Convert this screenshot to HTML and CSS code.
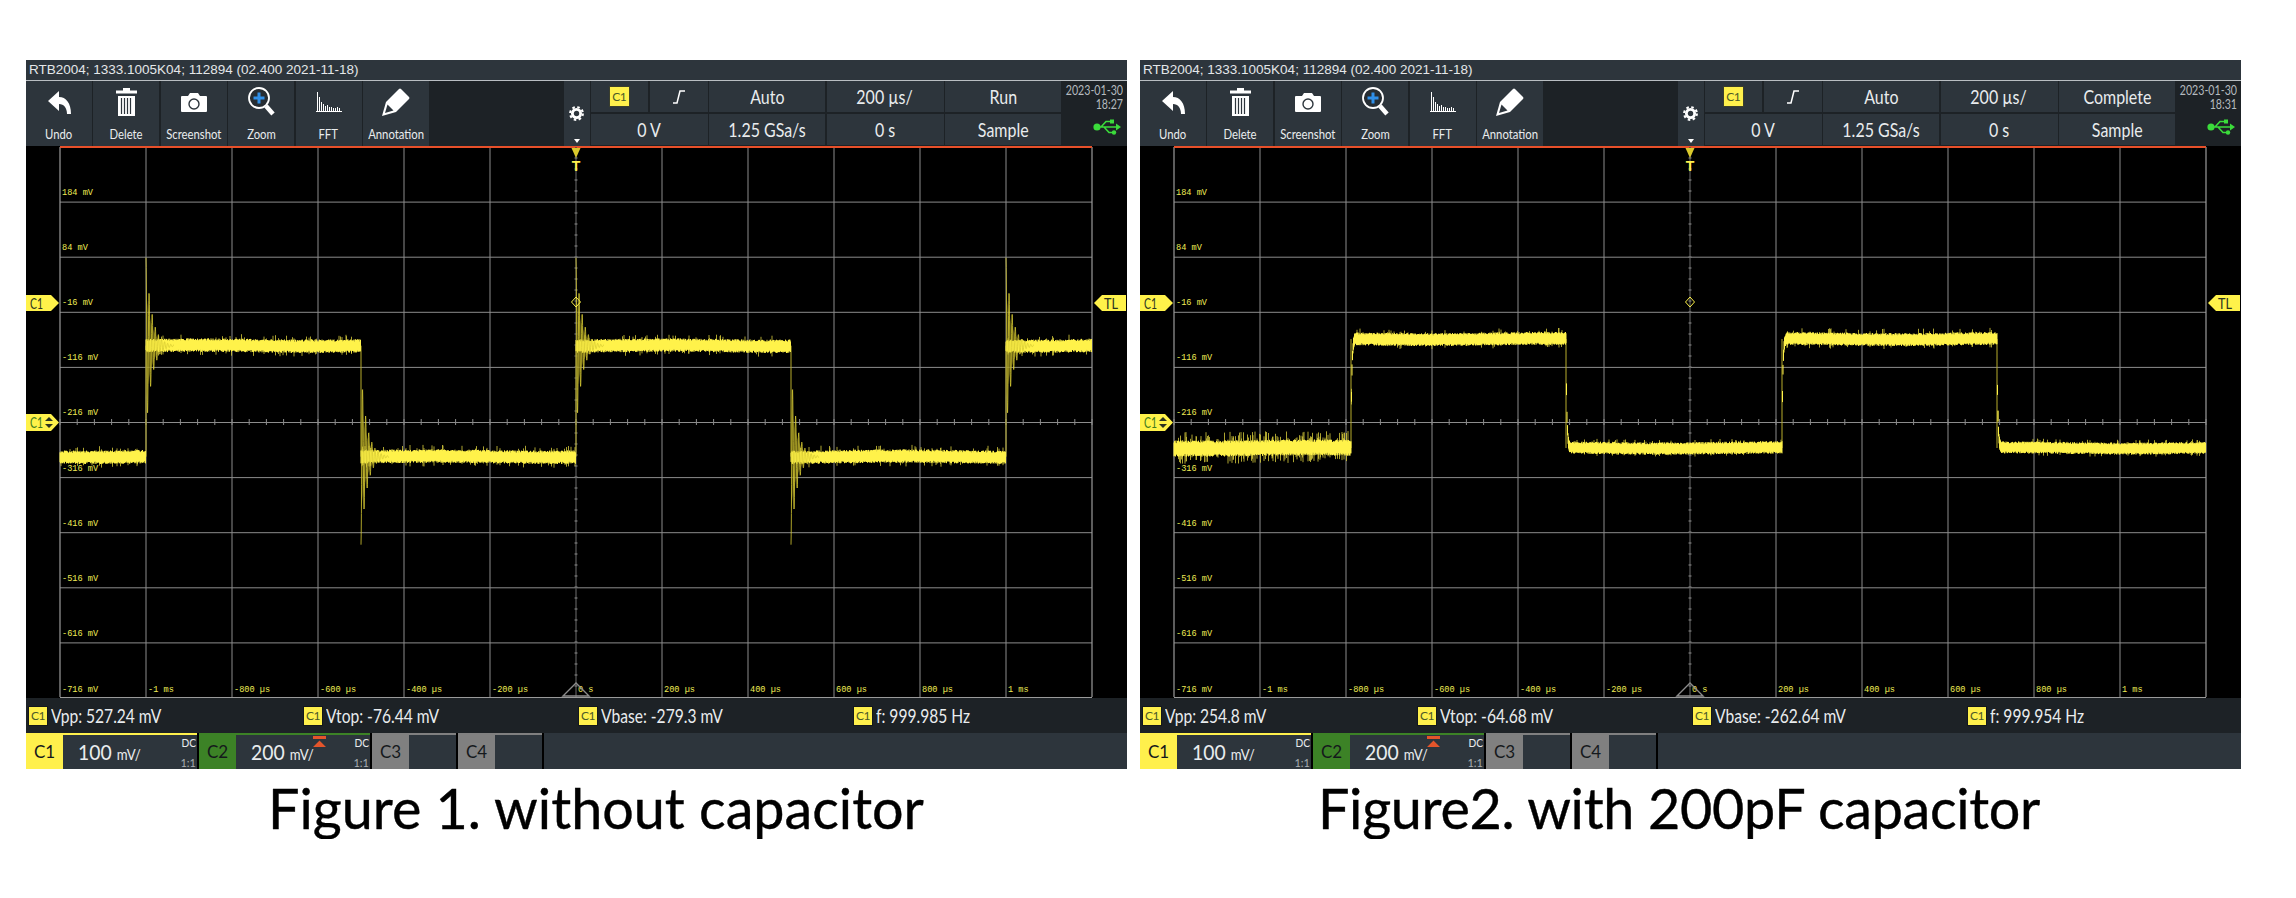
FILE: index.html
```html
<!DOCTYPE html>
<html>
<head>
    <title>Oscilloscope capture: with and without capacitor</title>
    <link rel="stylesheet" href="styles.css">
</head>
<body>
    <!-- shared icons -->
    <svg class="defs" width="0" height="0">
        <symbol id="i-undo" viewBox="0 0 23 23">
            <path d="M0 10 L11 0 V6 C18 6 23 12 23 23 H19 C19 17 16 13 11 13 V20 Z" fill="#fff"/>
        </symbol>
        <symbol id="i-trash" viewBox="0 0 21 28">
            <path d="M7 0 H14 V2.5 H21 V5.5 H0 V2.5 H7 Z M2 8 H19 V28 H2 Z" fill="#fff"/>
            <path d="M5.5 10 V26 M8.5 10 V26 M11.5 10 V26 M14.5 10 V26" stroke="#2d353c" stroke-width="1.2"/>
        </symbol>
        <symbol id="i-camera" viewBox="0 0 26 19">
            <path d="M0 4 Q0 3 1 3 H7 L9 0 H17 L19 3 H25 Q26 3 26 4 V18 Q26 19 25 19 H1 Q0 19 0 18 Z" fill="#fff"/>
            <circle cx="13" cy="11" r="5" fill="#fff" stroke="#2d353c" stroke-width="1.4"/>
        </symbol>
        <symbol id="i-zoom" viewBox="0 0 27 29">
            <circle cx="11" cy="11" r="10" fill="#262d33" stroke="#fff" stroke-width="1.8"/>
            <path d="M11 5.5 V16.5 M5.5 11 H16.5" stroke="#2f8fe8" stroke-width="3"/>
            <path d="M18 19 L25 27" stroke="#fff" stroke-width="4.5"/>
        </symbol>
        <symbol id="i-fft" viewBox="0 0 26 20">
            <path d="M0 19.5 H26 M1.5 19 V0 M3.5 19 V5 M5.5 19 V10 M7.5 19 V12 M9.5 19 V14 M11.5 19 V13 M13.5 19 V15 M15.5 19 V15 M17.5 19 V16 M19.5 19 V16 M21.5 19 V15 M23.5 19 V16" stroke="#fff" stroke-width="1"/>
        </symbol>
        <symbol id="i-pencil" viewBox="0 0 28 28">
            <path d="M0 28 L4 14 L17 1 Q18 0 19 1 L27 9 Q28 10 27 11 L14 24 Z" fill="#fff"/>
            <path d="M3 25 L5.5 16.5 L11.5 22.5 Z" fill="#2d353c"/>
        </symbol>
        <symbol id="i-gear" viewBox="0 0 16 16">
            <circle cx="8" cy="8" r="4.4" fill="none" stroke="#fff" stroke-width="3"/>
            <circle cx="8" cy="8" r="6.8" fill="none" stroke="#fff" stroke-width="2.2" stroke-dasharray="2.7 2.64"/>
        </symbol>
        <symbol id="i-usb" viewBox="0 0 28 16">
            <path d="M4 8 H24 M8 8 L13 2.5 H18 M11 8 L16 13.5 H20" fill="none" stroke="#3bdc3b" stroke-width="1.6"/>
            <circle cx="4" cy="8" r="3.6" fill="#3bdc3b"/>
            <path d="M23 4.5 L28 8 L23 11.5 Z M17 0.5 H21 V4.5 H17 Z" fill="#3bdc3b"/>
            <circle cx="21" cy="13.5" r="2.2" fill="#3bdc3b"/>
        </symbol>
        <symbol id="i-slope" viewBox="0 0 12 14">
            <path d="M0 13 H4 L7 1 H12" fill="none" stroke="#fff" stroke-width="1.5"/>
        </symbol>
        <symbol id="i-offset" viewBox="0 0 13 11">
            <path d="M0 0 H13 V3 H0 Z M6.5 4.5 L13 11 H0 Z" fill="#e4552b"/>
        </symbol>
    </svg>

    <div class="captures">
        <!-- Figure 1 -->
        <div class="capture">
            <div class="scope">
                <div class="title-bar">RTB2004; 1333.1005K04; 112894 (02.400 2021-11-18)</div>
                <div class="toolbar">
                    <div class="tool"><svg class="ico undo"><use href="#i-undo"/></svg><span>Undo</span></div>
                    <div class="tool"><svg class="ico trash"><use href="#i-trash"/></svg><span>Delete</span></div>
                    <div class="tool"><svg class="ico camera"><use href="#i-camera"/></svg><span>Screenshot</span></div>
                    <div class="tool"><svg class="ico zoom"><use href="#i-zoom"/></svg><span>Zoom</span></div>
                    <div class="tool"><svg class="ico fft"><use href="#i-fft"/></svg><span>FFT</span></div>
                    <div class="tool"><svg class="ico pencil"><use href="#i-pencil"/></svg><span>Annotation</span></div>
                    <div class="spacer"></div>
                    <div class="gear"><svg class="ico gear-ico"><use href="#i-gear"/></svg><i class="caret"></i></div>
                    <div class="status">
                        <div class="cell"><b class="chip">C1</b></div>
                        <div class="cell"><svg class="ico slope"><use href="#i-slope"/></svg></div>
                        <div class="cell"><span>Auto</span></div>
                        <div class="cell"><span>200 µs/</span></div>
                        <div class="cell"><span>Run</span></div>
                        <div class="cell wide"><span>0 V</span></div>
                        <div class="cell"><span>1.25 GSa/s</span></div>
                        <div class="cell"><span>0 s</span></div>
                        <div class="cell"><span>Sample</span></div>
                    </div>
                    <div class="clock">
                        <div>2023-01-30</div>
                        <div>18:27</div>
                        <svg class="ico usb"><use href="#i-usb"/></svg>
                    </div>
                </div>
                <svg class="plot" id="plot1" width="1101" height="552"></svg>
                <div class="measures">
                    <div class="measure"><b class="chip">C1</b><span>Vpp: 527.24 mV</span></div>
                    <div class="measure"><b class="chip">C1</b><span>Vtop: -76.44 mV</span></div>
                    <div class="measure"><b class="chip">C1</b><span>Vbase: -279.3 mV</span></div>
                    <div class="measure"><b class="chip">C1</b><span>f: 999.985 Hz</span></div>
                </div>
                <div class="channels">
                    <div class="ch on c1"><div class="ch-tag">C1</div><div class="ch-body"><span class="scale">100 <small>mV/</small></span><span class="dc">DC</span><span class="ratio">1:1</span></div></div>
                    <div class="ch on c2"><div class="ch-tag">C2</div><div class="ch-body"><span class="scale">200 <small>mV/</small></span><svg class="ico offset"><use href="#i-offset"/></svg><span class="dc">DC</span><span class="ratio">1:1</span></div></div>
                    <div class="ch off"><div class="ch-tag">C3</div><div class="ch-body"></div></div>
                    <div class="ch off"><div class="ch-tag">C4</div><div class="ch-body"></div></div>
                    <div class="ch-rest"></div>
                </div>
            </div>
            <div class="caption first">Figure 1. without capacitor</div>
        </div>

        <!-- Figure 2 -->
        <div class="capture">
            <div class="scope">
                <div class="title-bar">RTB2004; 1333.1005K04; 112894 (02.400 2021-11-18)</div>
                <div class="toolbar">
                    <div class="tool"><svg class="ico undo"><use href="#i-undo"/></svg><span>Undo</span></div>
                    <div class="tool"><svg class="ico trash"><use href="#i-trash"/></svg><span>Delete</span></div>
                    <div class="tool"><svg class="ico camera"><use href="#i-camera"/></svg><span>Screenshot</span></div>
                    <div class="tool"><svg class="ico zoom"><use href="#i-zoom"/></svg><span>Zoom</span></div>
                    <div class="tool"><svg class="ico fft"><use href="#i-fft"/></svg><span>FFT</span></div>
                    <div class="tool"><svg class="ico pencil"><use href="#i-pencil"/></svg><span>Annotation</span></div>
                    <div class="spacer"></div>
                    <div class="gear"><svg class="ico gear-ico"><use href="#i-gear"/></svg><i class="caret"></i></div>
                    <div class="status">
                        <div class="cell"><b class="chip">C1</b></div>
                        <div class="cell"><svg class="ico slope"><use href="#i-slope"/></svg></div>
                        <div class="cell"><span>Auto</span></div>
                        <div class="cell"><span>200 µs/</span></div>
                        <div class="cell"><span>Complete</span></div>
                        <div class="cell wide"><span>0 V</span></div>
                        <div class="cell"><span>1.25 GSa/s</span></div>
                        <div class="cell"><span>0 s</span></div>
                        <div class="cell"><span>Sample</span></div>
                    </div>
                    <div class="clock">
                        <div>2023-01-30</div>
                        <div>18:31</div>
                        <svg class="ico usb"><use href="#i-usb"/></svg>
                    </div>
                </div>
                <svg class="plot" id="plot2" width="1101" height="552"></svg>
                <div class="measures">
                    <div class="measure"><b class="chip">C1</b><span>Vpp: 254.8 mV</span></div>
                    <div class="measure"><b class="chip">C1</b><span>Vtop: -64.68 mV</span></div>
                    <div class="measure"><b class="chip">C1</b><span>Vbase: -262.64 mV</span></div>
                    <div class="measure"><b class="chip">C1</b><span>f: 999.954 Hz</span></div>
                </div>
                <div class="channels">
                    <div class="ch on c1"><div class="ch-tag">C1</div><div class="ch-body"><span class="scale">100 <small>mV/</small></span><span class="dc">DC</span><span class="ratio">1:1</span></div></div>
                    <div class="ch on c2"><div class="ch-tag">C2</div><div class="ch-body"><span class="scale">200 <small>mV/</small></span><svg class="ico offset"><use href="#i-offset"/></svg><span class="dc">DC</span><span class="ratio">1:1</span></div></div>
                    <div class="ch off"><div class="ch-tag">C3</div><div class="ch-body"></div></div>
                    <div class="ch off"><div class="ch-tag">C4</div><div class="ch-body"></div></div>
                    <div class="ch-rest"></div>
                </div>
            </div>
            <div class="caption second">Figure2. with 200pF capacitor</div>
        </div>
    </div>
    <script src="script.js"></script>
</body>
</html>
```

FILE: styles.css
```css
body {
    margin: 0;
    background: #fff;
    font-family: "Lato", "Noto Sans", sans-serif;
}
.defs {
    display: block;
    height: 0;
}
.captures {
    display: flex;
    gap: 13px;
    padding: 60px 0 0 26px;
}
.capture {
    width: 1101px;
}
.scope {
    background: #000;
    color: #e9ecee;
}
.title-bar {
    height: 20px;
    line-height: 20px;
    padding-left: 3px;
    background: #2d353c;
    border-bottom: 1px solid #b9bec2;
    font-family: "Liberation Sans", sans-serif;
    font-size: 13.5px;
    color: #e4e7e9;
}

/* top toolbar */
.toolbar {
    display: flex;
    height: 65px;
    background: #1d2226;
}
.tool {
    width: 66px;
    margin-right: 1.4px;
    background: #2d353c;
    position: relative;
    display: flex;
    flex-direction: column;
    align-items: center;
}
.tool span {
    position: absolute;
    top: 45px;
    font-size: 13px;
    line-height: 16px;
    white-space: nowrap;
    transform: scaleX(.87);
}
.ico {
    display: block;
    flex: none;
}
.undo { width: 23px; height: 23px; margin-top: 10px; }
.trash { width: 21px; height: 28px; margin-top: 7px; }
.camera { width: 26px; height: 19px; margin-top: 12px; }
.zoom { width: 27px; height: 29px; margin-top: 6px; }
.fft { width: 26px; height: 20px; margin-top: 11px; }
.pencil { width: 28px; height: 28px; margin-top: 7px; }
.spacer {
    flex: 1;
}
.gear {
    width: 26px;
    margin-right: 1px;
    background: #2d353c;
    display: flex;
    flex-direction: column;
    align-items: center;
}
.gear-ico {
    width: 15px;
    height: 15px;
    margin-top: 25px;
}
.caret {
    margin-top: 18px;
    border: 3.5px solid transparent;
    border-top: 4px solid #fff;
    border-bottom: 0;
}
.status {
    display: grid;
    grid-template-columns: 57.5px 58px 116px 117px 116px;
    grid-template-rows: 31px 31px;
    gap: 2px 1.5px;
}
.cell {
    background: #2d353c;
    display: flex;
    align-items: center;
    justify-content: center;
    font-size: 19px;
    color: #e9ecee;
}
.cell span {
    white-space: nowrap;
    transform: scaleX(.84);
}
.wide {
    grid-column: span 2;
}
.slope {
    width: 12px;
    height: 14px;
}
.chip {
    display: flex;
    align-items: center;
    justify-content: center;
    flex: none;
    width: 20px;
    height: 20px;
    background: #fff04c;
    border: 1px solid #14181b;
    box-sizing: border-box;
    font-size: 12px;
    font-weight: 400;
    color: #4c5a28;
    letter-spacing: -.5px;
}
.cell .chip {
    border-color: #3b3f2c;
    width: 21px;
    height: 21px;
}
.clock {
    width: 66px;
    flex: none;
    padding: 2px 4px 0 0;
    box-sizing: border-box;
    font-size: 14px;
    line-height: 14px;
    color: #b4babf;
}
.clock div {
    display: flex;
    justify-content: flex-end;
    white-space: nowrap;
    transform: scaleX(.76);
    transform-origin: right;
}
.usb {
    width: 28px;
    height: 16px;
    margin: 8px 2px 0 auto;
}

.plot {
    display: block;
}
.plot text {
    font-family: "Liberation Mono", monospace;
    font-size: 8.6px;
    fill: #eeeb55;
}
.plot .flag-text {
    font-family: "Lato", sans-serif;
    font-size: 16px;
    fill: #2b3320;
}
.plot .flag-text.green {
    fill: #3e7a1c;
}
.plot .t-mark {
    font-family: "Liberation Sans", sans-serif;
    font-size: 14px;
    font-weight: 700;
    fill: #fff04c;
}

/* measurement row */
.measures {
    display: grid;
    grid-template-columns: repeat(4, 275px);
    height: 35px;
    background: #1d2226;
    font-size: 19px;
}
.measure {
    display: flex;
    align-items: center;
    gap: 3px;
    padding-left: 2px;
    white-space: nowrap;
}
.measure span {
    transform: scaleX(.82);
    transform-origin: left;
}

/* channel row */
.channels {
    display: flex;
    height: 36px;
    gap: 2px;
    background: #000;
}
.ch {
    display: flex;
    flex: none;
}
.ch-tag {
    width: 37px;
    display: flex;
    align-items: center;
    justify-content: center;
    font-size: 17px;
    color: #15191c;
}
.ch-body {
    position: relative;
    background: #2d353c;
    border-top: 2px solid #9a9a9a;
    box-sizing: border-box;
}
.c1 .ch-tag { background: #fff04c; }
.c1 .ch-body { border-top-color: #fff04c; }
.c2 .ch-tag { background: #3c8226; }
.c2 .ch-body { border-top-color: #3c8226; }
.on .ch-body { width: 134px; }
.off .ch-tag { background: #808080; }
.off .ch-body { width: 47px; border-top-color: #808080; }
.scale {
    position: absolute;
    left: 15px;
    top: 4px;
    font-size: 22px;
    line-height: 26px;
    white-space: nowrap;
    transform: scaleX(.88);
    transform-origin: left;
}
.scale small {
    font-size: 15px;
}
.dc {
    position: absolute;
    right: 1px;
    top: 2px;
    font-size: 12px;
    line-height: 12px;
    transform: scaleX(.85);
    transform-origin: right;
}
.ratio {
    position: absolute;
    right: 1px;
    bottom: 0;
    font-size: 11px;
    line-height: 12px;
    color: #a8adb1;
}
.offset {
    position: absolute;
    left: 77px;
    top: 1px;
    width: 13px;
    height: 11px;
}
.ch-rest {
    flex: 1;
    background: #2d353c;
}

.caption {
    margin-top: 8px;
    font-size: 55.7px;
    line-height: 62px;
    color: #000;
    white-space: nowrap;
    -webkit-text-stroke: .4px #000;
}
.first {
    padding-left: 242px;
}
.second {
    padding-left: 178px;
    letter-spacing: -.3px;
}
```

FILE: script.js
```js
// draws grid, labels, markers and the noisy trace of one capture
var SVG_NS = 'http://www.w3.org/2000/svg';
var LEFT = 34, RIGHT = 1066, TOP = 1, BOTTOM = 551, MID_X = 550, MID_Y = 276;
var TRACE = '#fff24a';

function add(svg, tag, attrs, text) {
    var el = document.createElementNS(SVG_NS, tag);
    for (var k in attrs) el.setAttribute(k, attrs[k]);
    if (text) el.textContent = text;
    svg.appendChild(el);
    return el;
}

function rng(seed) {
    return function () {
        seed = (seed * 1664525 + 1013904223) % 4294967296;
        return seed / 4294967296;
    };
}

function drawGrid(svg) {
    var i, d = '';
    for (i = 1; i < 12; i++) {
        if (LEFT + i * 86 === MID_X) continue;
        d += 'M' + (LEFT + i * 86) + ' ' + TOP + 'V' + BOTTOM;
    }
    add(svg, 'path', { d: d, stroke: '#5e5e5e', 'stroke-width': 1.5 });

    d = '';
    for (i = 1; i < 10; i++) d += 'M' + LEFT + ' ' + (TOP + i * 55.1).toFixed(1) + 'H' + RIGHT;
    add(svg, 'path', { d: d, stroke: '#8c8c8c', 'stroke-width': 1 });

    // frame
    add(svg, 'path', { d: 'M' + LEFT + ' ' + BOTTOM + 'V' + TOP + 'M' + RIGHT + ' ' + TOP + 'V' + BOTTOM + 'M' + LEFT + ' ' + (BOTTOM + .5) + 'H' + RIGHT, stroke: '#9a9a9a', 'stroke-width': 1.2 });
    add(svg, 'path', { d: 'M' + (LEFT) + ' 1H' + RIGHT, stroke: '#e8502a', 'stroke-width': 2 });

    // centre axes with ticks
    add(svg, 'path', { d: 'M' + MID_X + ' ' + TOP + 'V' + BOTTOM, stroke: '#4a4a4a', 'stroke-width': 1.5 });
    d = '';
    for (i = 0; i <= 60; i++) d += 'M' + (LEFT + i * 17.2).toFixed(1) + ' ' + (MID_Y - 3) + 'v6';
    for (i = 1; i < 50; i++) d += 'M' + (MID_X - 1.5) + ' ' + (TOP + i * 11) + 'h3';
    add(svg, 'path', { d: d, stroke: '#8c8c8c', 'stroke-width': 1 });
}

function drawLabels(svg) {
    var yLabels = ['184 mV', '84 mV', '-16 mV', '-116 mV', '-216 mV', '-316 mV', '-416 mV', '-516 mV', '-616 mV'];
    yLabels.forEach(function (t, i) {
        add(svg, 'text', { x: LEFT + 2, y: 49 + i * 55.1 }, t);
    });
    var xLabels = ['-716 mV', '-1 ms', '-800 µs', '-600 µs', '-400 µs', '-200 µs', '0 s', '200 µs', '400 µs', '600 µs', '800 µs', '1 ms'];
    xLabels.forEach(function (t, i) {
        add(svg, 'text', { x: LEFT + 2 + i * 86, y: 546 }, t);
    });
}

function drawMarkers(svg) {
    add(svg, 'path', { d: 'M0 149H25L33 157L25 165H0Z M0 268H25L33 276.5L25 285H0Z M1100 149H1076L1068 157L1076 165H1100Z', fill: TRACE });
    add(svg, 'text', { x: 4, y: 163, class: 'flag-text', textLength: 13, lengthAdjust: 'spacingAndGlyphs' }, 'C1');
    add(svg, 'text', { x: 4, y: 282, class: 'flag-text green', textLength: 13, lengthAdjust: 'spacingAndGlyphs' }, 'C1');
    add(svg, 'path', { d: 'M19 275L23 271L27 275Z M19 278L23 282L27 278Z', fill: '#2b3320' });
    add(svg, 'text', { x: 1078, y: 163, class: 'flag-text', textLength: 14, lengthAdjust: 'spacingAndGlyphs' }, 'TL');

    add(svg, 'path', { d: 'M' + (MID_X - 4.5) + ' 2H' + (MID_X + 4.5) + 'L' + MID_X + ' 12Z', fill: '#d9c92c' });
    add(svg, 'text', { x: MID_X - 4.3, y: 25, class: 't-mark' }, 'T');
    add(svg, 'path', { d: 'M' + MID_X + ' 151L' + (MID_X + 4.5) + ' 156L' + MID_X + ' 161L' + (MID_X - 4.5) + ' 156Z', fill: 'none', stroke: TRACE, 'stroke-width': 1 });
    add(svg, 'path', { d: 'M' + (MID_X - 13) + ' 550L' + MID_X + ' 537L' + (MID_X + 13) + ' 550Z', fill: 'none', stroke: '#8c8c8c', 'stroke-width': 1.4 });
}

// plateaus: x where it starts, y level, band half height, noise spike size, spike rate
function drawTrace(svg, cfg) {
    var rand = rng(cfg.seed), band = '', spikes = '', ring = '', glow = '', edges = '';
    cfg.parts.forEach(function (p, i) {
        var next = cfg.parts[i + 1], end = next ? next.x : RIGHT, x;
        var prev = cfg.parts[i - 1];
        for (x = p.x; x < end; x += 0.5) {
            var t = x - p.x;
            var settle = prev && !cfg.ring ? (prev.y - p.y) * Math.exp(-t / 0.8) : 0;
            var y = p.y + settle + Math.sin(x / 37) * 0.6;
            var hi = p.band * (0.8 + rand() * 0.45), lo = p.band * (0.8 + rand() * 0.45);
            band += 'M' + x + ' ' + (y - hi).toFixed(1) + 'V' + (y + lo).toFixed(1);
            if (rand() < p.rate) {
                var s = p.spike * (0.5 + rand() * 0.7);
                spikes += 'M' + x + ' ' + (y - s).toFixed(1) + 'V' + (y + p.spike * (0.4 + rand() * 0.7)).toFixed(1);
            }
        }
        if (prev) {
            edges += 'M' + p.x + ' ' + prev.y + 'V' + p.y;
            if (cfg.ring) {
                var dir = p.y < prev.y ? -1 : 1, k;
                ring += 'M' + p.x + ' ' + (p.y + dir * cfg.ring).toFixed(1);
                for (k = 0.2; k < 28; k += 0.2) {
                    // decaying ring: fast period, envelope from the spike height
                    var env = cfg.ring * Math.exp(-k / 6);
                    var v = p.y + dir * env * Math.cos(k * 2 * Math.PI / 3.1);
                    ring += 'L' + (p.x + k).toFixed(1) + ' ' + v.toFixed(1);
                    // dim smear under the ring
                    if (k < 20) glow += 'M' + (p.x + k).toFixed(1) + ' ' + (p.y - env * 0.6).toFixed(1) + 'V' + (p.y + env * 0.6).toFixed(1);
                }
            }
        }
    });
    add(svg, 'path', { d: edges, stroke: '#b8ad2c', 'stroke-width': 1, fill: 'none' });
    if (glow) add(svg, 'path', { d: glow, stroke: '#6e6818', 'stroke-width': 0.2 });
    add(svg, 'path', { d: spikes, stroke: '#d8cd3c', 'stroke-width': 0.8 });
    add(svg, 'path', { d: band, stroke: TRACE, 'stroke-width': 1 });
    if (ring) add(svg, 'path', { d: ring, stroke: '#d8cc34', 'stroke-width': 0.8, fill: 'none' });
}

function drawPlot(id, cfg) {
    var svg = document.getElementById(id);
    drawGrid(svg);
    drawLabels(svg);
    drawTrace(svg, cfg);
    drawMarkers(svg);
}

var hi1 = 199.7, lo1 = 310.7;
function part1(x, y) { return { x: x, y: y, band: 5.4, spike: 9.5, rate: 0.12 }; }
drawPlot('plot1', {
    seed: 11, ring: 88,
    parts: [part1(34, lo1), part1(120, hi1), part1(335, lo1), part1(550, hi1), part1(765, lo1), part1(980, hi1)]
});

var hi2 = 193, lo2 = 302;
drawPlot('plot2', {
    seed: 29, ring: 0,
    parts: [
        { x: 34, y: lo2, band: 6.5, spike: 14, rate: 0.24 },
        { x: 211, y: hi2, band: 5.2, spike: 9, rate: 0.12 },
        { x: 426, y: lo2, band: 5, spike: 7.5, rate: 0.1 },
        { x: 642, y: hi2, band: 5.2, spike: 9, rate: 0.12 },
        { x: 857, y: lo2, band: 4.8, spike: 7.5, rate: 0.1 }
    ]
});
```
